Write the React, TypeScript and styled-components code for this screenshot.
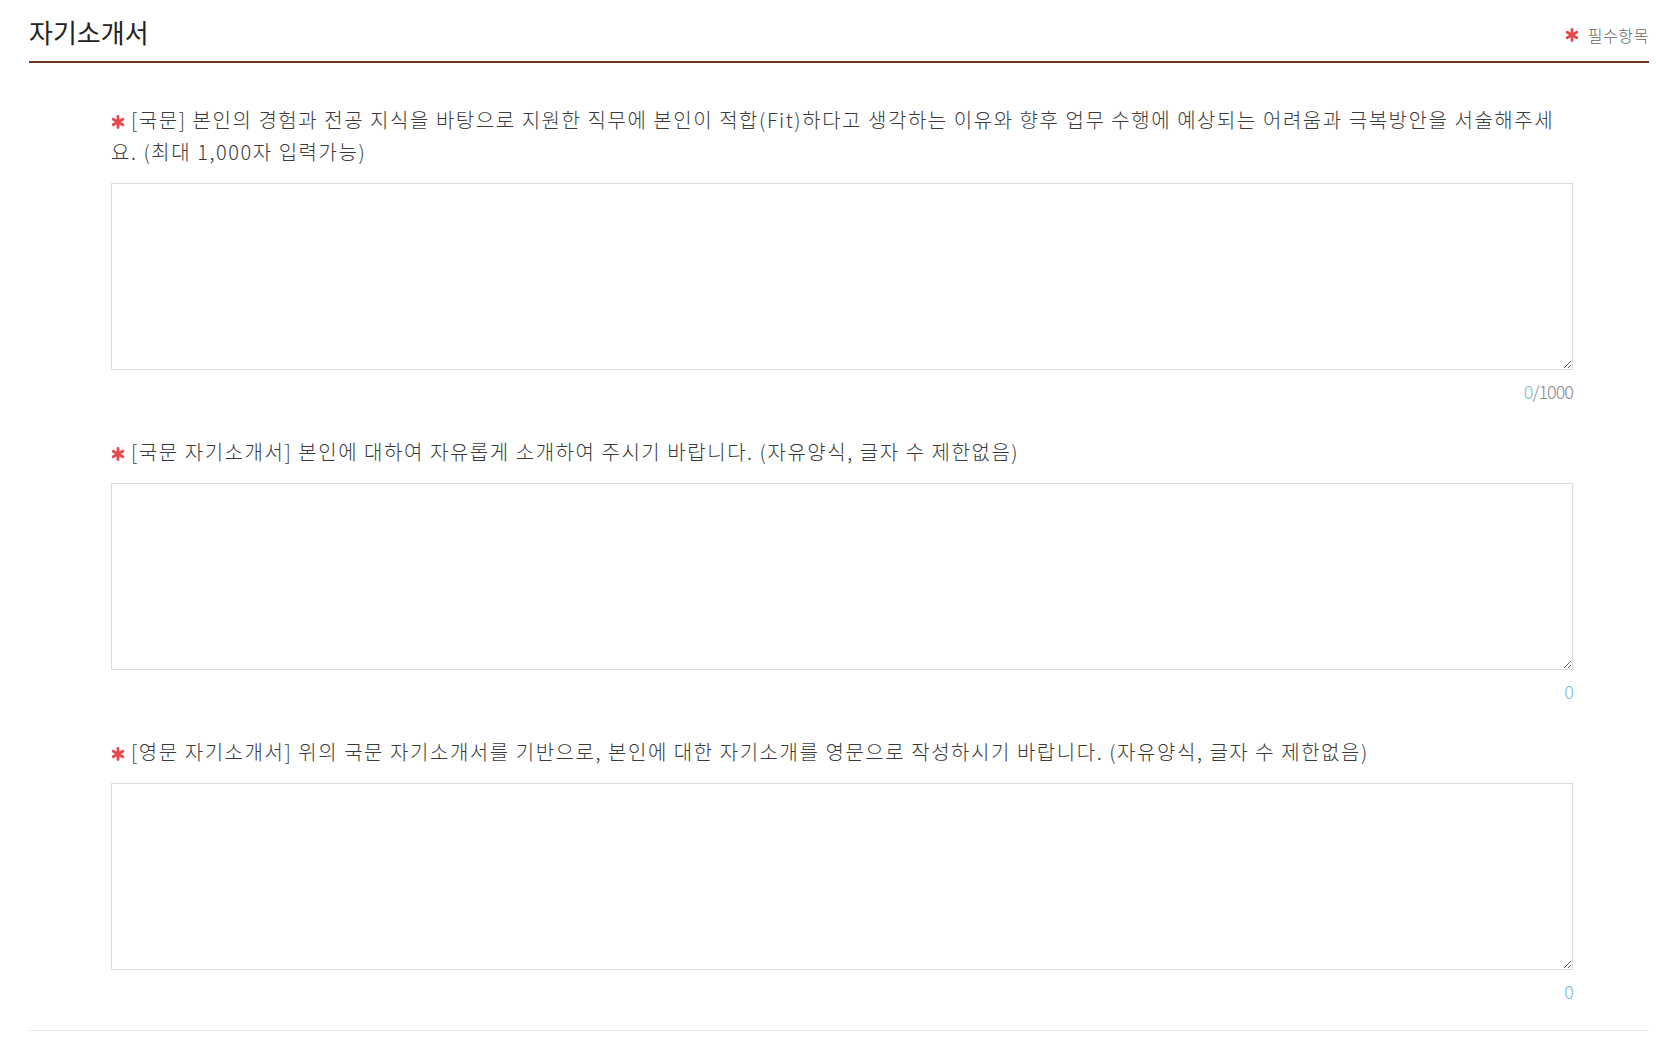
import styled, { createGlobalStyle } from "styled-components";

const GlobalStyle = createGlobalStyle`
  html, body {
    margin: 0;
    padding: 0;
    background: #ffffff;
  }
  body {
    font-family: "Noto Sans CJK KR", "Noto Sans", sans-serif;
    color: #333;
  }
`;

const Page = styled.div`
  padding: 15px 7px 0 29px;
`;

const Header = styled.div`
  display: flex;
  justify-content: space-between;
  align-items: flex-end;
  padding-bottom: 12px;
  border-bottom: 2px solid #6d3a1f;
`;

const Title = styled.h2`
  margin: 0;
  font-size: 26px;
  line-height: 34px;
  font-weight: 400;
  color: #222;
  letter-spacing: 0;
`;

const RequiredNote = styled.div`
  display: flex;
  align-items: center;
  gap: 3px;
  margin-bottom: 3px;
  font-size: 16px;
  line-height: 22px;
  font-weight: 300;
  color: #666;
  letter-spacing: 0.6px;
`;

const Body = styled.div`
  display: flex;
  flex-direction: column;
  gap: 34px;
  padding: 41px 76px 28px 82px;
  border-bottom: 1px solid #e8e8e8;
`;

const Question = styled.div`
  display: flex;
  flex-direction: column;
`;

const Label = styled.p`
  margin: 0 0 15px;
  font-size: 20px;
  line-height: 32px;
  font-weight: 300;
  color: #3a3a3a;
  letter-spacing: 1.55px;
`;

const StarMark = styled.svg<{ $size: number }>`
  width: ${({ $size }) => $size}px;
  height: ${({ $size }) => $size}px;
  margin-right: 6px;
  vertical-align: -1px;
`;

const AnswerBox = styled.textarea`
  display: block;
  box-sizing: border-box;
  width: 100%;
  height: 187px;
  margin: 0;
  padding: 8px 10px;
  border: 1px solid #dcdcdc;
  border-radius: 0;
  resize: vertical;
  outline: none;
  font-family: inherit;
  font-size: 16px;
  color: #333;
`;

const Counter = styled.div`
  margin-top: 10px;
  text-align: right;
  font-size: 18px;
  line-height: 22px;
  font-weight: 300;
  color: #888;
  letter-spacing: -1px;
`;

const Count = styled.span`
  color: #7bb8cf;
`;

const Star = ({ size = 14 }: { size?: number }) => (
  <StarMark $size={size} viewBox="0 0 14 14">
    <g stroke="#e5484d" strokeWidth="2.8" strokeLinecap="round">
      <line x1="7" y1="1.5" x2="7" y2="12.5" />
      <line x1="2.2" y1="4.2" x2="11.8" y2="9.8" />
      <line x1="2.2" y1="9.8" x2="11.8" y2="4.2" />
    </g>
  </StarMark>
);

type QuestionItem = {
  text: string;
  limit?: number;
};

const questions: QuestionItem[] = [
  {
    text: "[국문] 본인의 경험과 전공 지식을 바탕으로 지원한 직무에 본인이 적합(Fit)하다고 생각하는 이유와 향후 업무 수행에 예상되는 어려움과 극복방안을 서술해주세요. (최대 1,000자 입력가능)",
    limit: 1000,
  },
  {
    text: "[국문 자기소개서] 본인에 대하여 자유롭게 소개하여 주시기 바랍니다. (자유양식, 글자 수 제한없음)",
  },
  {
    text: "[영문 자기소개서] 위의 국문 자기소개서를 기반으로, 본인에 대한 자기소개를 영문으로 작성하시기 바랍니다. (자유양식, 글자 수 제한없음)",
  },
];

export default function App() {
  return (
    <>
      <GlobalStyle />
      <Page>
        <Header>
          <Title>자기소개서</Title>
          <RequiredNote>
            <Star size={14} />
            필수항목
          </RequiredNote>
        </Header>
        <Body>
          {questions.map((q, i) => (
            <Question key={i}>
              <Label>
                <Star />
                {q.text}
              </Label>
              <AnswerBox />
              <Counter>
                <Count>0</Count>
                {q.limit ? `/${q.limit}` : ""}
              </Counter>
            </Question>
          ))}
        </Body>
      </Page>
    </>
  );
}
